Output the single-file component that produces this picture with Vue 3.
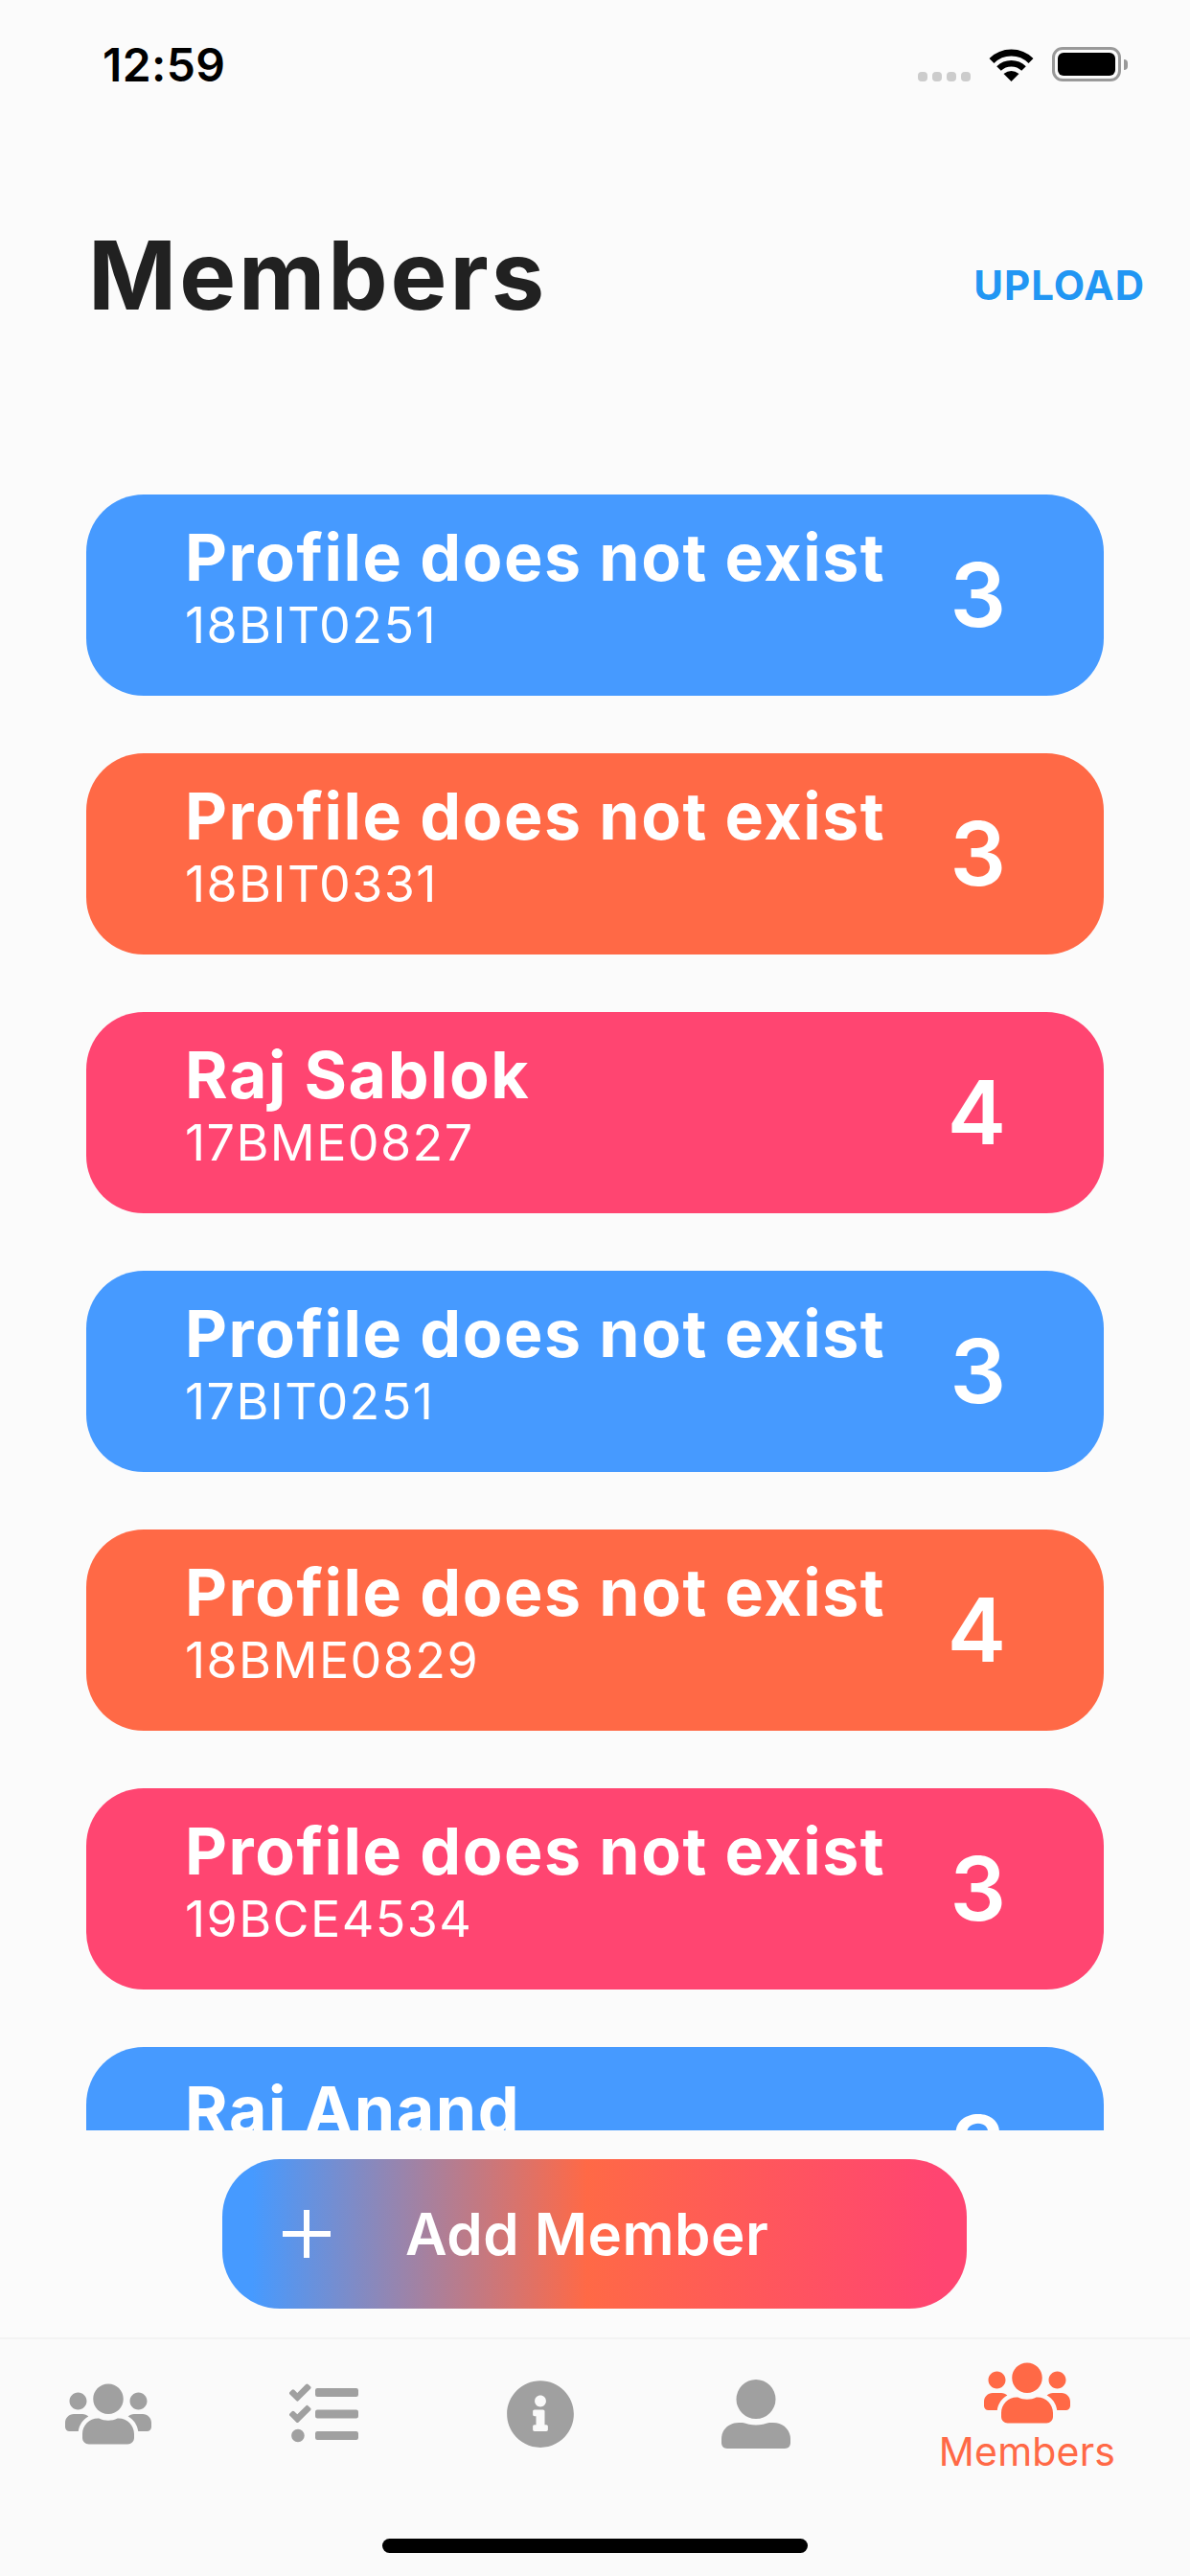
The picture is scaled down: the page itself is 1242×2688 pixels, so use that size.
<template>
  <div class="page">
    <!-- Status bar -->
    <div class="status">
      <span class="time">12:59</span>
      <div class="status-right">
        <div class="signal">
          <i v-for="n in 4" :key="n"></i>
        </div>
        <svg class="wifi" width="47" height="36" viewBox="0 0 47 36">
          <path d="M3 14.5A29 29 0 0 1 44 14.5" fill="none" stroke="#000" stroke-width="7" />
          <path d="M10.5 22.5A18.5 18.5 0 0 1 36.5 22.5" fill="none" stroke="#000" stroke-width="6.5" />
          <path d="M23.5 36L15.5 28Q23.5 22 31.5 28Z" fill="#000" />
        </svg>
        <div class="battery"><span></span></div>
      </div>
    </div>

    <!-- Header -->
    <div class="header">
      <h1>Members</h1>
      <a class="upload">UPLOAD</a>
    </div>

    <!-- Member list -->
    <div class="list">
      <div v-for="member in members" :key="member.id" class="card" :class="member.color">
        <div class="info">
          <div class="name">{{ member.name }}</div>
          <div class="reg">{{ member.id }}</div>
        </div>
        <div class="count">{{ member.count }}</div>
      </div>
    </div>

    <!-- Add button -->
    <div class="fab-row">
      <button class="fab">
        <svg class="plus" width="50" height="50" viewBox="0 0 50 50">
          <path d="M25 0V50M0 25H50" stroke="#fff" stroke-width="6" />
        </svg>
        <span>Add Member</span>
      </button>
    </div>

    <!-- Tab bar -->
    <div class="tabs">
      <div v-for="tab in tabs" :key="tab.name" class="tab" :class="{ active: tab.active }">
        <svg :width="tab.w" :height="tab.h" :viewBox="tab.box" fill="currentColor">
          <path :d="tab.d" />
        </svg>
        <span v-if="tab.active" class="tab-label">{{ tab.name }}</span>
      </div>
    </div>
    <div class="home"></div>
  </div>
</template>

<script setup>
const members = [
  { name: 'Profile does not exist', id: '18BIT0251', count: 3, color: 'blue' },
  { name: 'Profile does not exist', id: '18BIT0331', count: 3, color: 'orange' },
  { name: 'Raj Sablok', id: '17BME0827', count: 4, color: 'pink' },
  { name: 'Profile does not exist', id: '17BIT0251', count: 3, color: 'blue' },
  { name: 'Profile does not exist', id: '18BME0829', count: 4, color: 'orange' },
  { name: 'Profile does not exist', id: '19BCE4534', count: 3, color: 'pink' },
  { name: 'Raj Anand', id: '18BIT0252', count: 3, color: 'blue' }
]

const usersPath = 'M96 224c35.3 0 64-28.7 64-64s-28.7-64-64-64-64 28.7-64 64 28.7 64 64 64zm448 0c35.3 0 64-28.7 64-64s-28.7-64-64-64-64 28.7-64 64 28.7 64 64 64zm32 32h-64c-17.6 0-33.5 7.1-45.1 18.6 40.3 22.1 68.9 62 75.1 109.4h66c17.7 0 32-14.3 32-32v-32c0-35.3-28.7-64-64-64zm-256 0c61.9 0 112-50.1 112-112S381.9 32 320 32 208 82.1 208 144s50.1 112 112 112zm76.8 32h-8.3c-20.8 10-43.9 16-68.5 16s-47.6-6-68.5-16h-8.3C179.6 288 128 339.6 128 403.2V432c0 26.5 21.5 48 48 48h288c26.5 0 48-21.5 48-48v-28.8c0-63.6-51.6-115.2-115.2-115.2zm-223.7-13.4C161.5 263.1 145.6 256 128 256H64c-35.3 0-64 28.7-64 64v32c0 17.7 14.3 32 32 32h65.9c6.3-47.4 34.9-87.3 75.2-109.4z'

const tabs = [
  { name: 'Groups', w: 90, h: 72, box: '0 0 640 512', d: usersPath },
  { name: 'Tasks', w: 72, h: 72, box: '0 0 512 512', d: 'M139.61 35.5a12 12 0 0 0-17 0L58.93 98.81l-22.7-22.12a12 12 0 0 0-17 0L3.53 92.41a12 12 0 0 0 0 17l47.59 47.4a12.78 12.78 0 0 0 17.61 0l15.59-15.62L156.52 69a12.09 12.09 0 0 0 .09-17zm0 159.19a12 12 0 0 0-17 0l-63.68 63.72-22.7-22.1a12 12 0 0 0-17 0L3.53 252a12 12 0 0 0 0 17L51 316.5a12.77 12.77 0 0 0 17.6 0l15.7-15.69 72.2-72.22a12 12 0 0 0 .09-16.9zM64 368c-26.49 0-48.59 21.5-48.59 48S37.53 464 64 464a48 48 0 0 0 0-96zm432 16H208a16 16 0 0 0-16 16v32a16 16 0 0 0 16 16h288a16 16 0 0 0 16-16v-32a16 16 0 0 0-16-16zm0-320H208a16 16 0 0 0-16 16v32a16 16 0 0 0 16 16h288a16 16 0 0 0 16-16V80a16 16 0 0 0-16-16zm0 160H208a16 16 0 0 0-16 16v32a16 16 0 0 0 16 16h288a16 16 0 0 0 16-16v-32a16 16 0 0 0-16-16z' },
  { name: 'Info', w: 72, h: 72, box: '0 0 512 512', d: 'M256 8C119.043 8 8 119.083 8 256c0 136.997 111.043 248 248 248s248-111.003 248-248C504 119.083 392.957 8 256 8zm0 110c23.196 0 42 18.804 42 42s-18.804 42-42 42-42-18.804-42-42 18.804-42 42-42zm56 254c0 6.627-5.373 12-12 12h-88c-6.627 0-12-5.373-12-12v-24c0-6.627 5.373-12 12-12h12v-64h-12c-6.627 0-12-5.373-12-12v-24c0-6.627 5.373-12 12-12h64c6.627 0 12 5.373 12 12v100h12c6.627 0 12 5.373 12 12v24z' },
  { name: 'Profile', w: 72, h: 72, box: '0 0 72 72', d: 'M36 0a20.5 20.5 0 1 0 0 41a20.5 20.5 0 1 0 0-41zM6 72C2 72 0 69 0 66V62C0 52 8 45 18 45H22C26 46 31 47.5 36 47.5C41 47.5 46 46 50 45H54C64 45 72 52 72 62V66C72 69 70 72 66 72Z' },
  { name: 'Members', w: 90, h: 72, box: '0 0 640 512', d: usersPath, active: true }
]
</script>

<style scoped>
.page {
  width: 1242px;
  height: 2688px;
  position: relative;
  display: flex;
  flex-direction: column;
  overflow: hidden;
  background: #fbfbfb;
  font-family: Inter, "Liberation Sans", sans-serif;
}

/* status bar */
.status {
  height: 132px;
  box-sizing: border-box;
  padding: 42px 72px 0 107px;
  display: flex;
  justify-content: space-between;
  align-items: flex-start;
}

.time {
  font-size: 48px;
  line-height: 52px;
  font-weight: 600;
  color: #000;
  letter-spacing: 0.4px;
}

.status-right {
  display: flex;
  align-items: flex-end;
  margin-top: 7px;
}

.signal {
  display: flex;
  gap: 5px;
  margin-right: 19px;
}

.signal i {
  width: 10px;
  height: 10px;
  border-radius: 4px;
  background: #ccc;
}

.wifi {
  margin-right: 19px;
}

.battery {
  width: 72px;
  height: 36px;
  box-sizing: border-box;
  border: 3px solid #999;
  border-radius: 11px;
  padding: 3px;
  position: relative;
}

.battery span {
  display: block;
  height: 100%;
  background: #000;
  border-radius: 6px;
}

.battery::after {
  content: "";
  position: absolute;
  right: -10px;
  top: 10px;
  width: 4px;
  height: 11px;
  background: #999;
  border-radius: 0 4px 4px 0;
}

/* header */
.header {
  height: 384px;
  box-sizing: border-box;
  padding: 95px 47px 0 92px;
  display: flex;
  justify-content: space-between;
  align-items: flex-start;
}

h1 {
  margin: 0;
  font-size: 99px;
  line-height: 120px;
  font-weight: 700;
  letter-spacing: 2.9px;
  color: #212121;
}

.upload {
  margin-top: 46px;
  font-size: 42px;
  line-height: 50px;
  font-weight: 700;
  letter-spacing: 1px;
  color: #2196f3;
}

/* list */
.list {
  height: 1707px;
  overflow: hidden;
  padding: 0 90px;
  display: flex;
  flex-direction: column;
  gap: 60px;
}

.card {
  flex: none;
  height: 210px;
  box-sizing: border-box;
  padding: 26px 102px 0 103px;
  border-radius: 60px;
  display: flex;
  justify-content: space-between;
  color: #fff;
}

.blue { background: #469aff; }
.orange { background: #ff6946; }
.pink { background: #ff4571; }

.name {
  font-size: 68px;
  line-height: 78px;
  font-weight: 700;
  letter-spacing: 1.55px;
}

.reg {
  margin-top: 3px;
  font-size: 52px;
  line-height: 60px;
  font-weight: 400;
  letter-spacing: 1.4px;
}

.count {
  font-size: 92px;
  line-height: 112px;
  font-weight: 600;
  margin-top: 23px;
}

/* add button */
.fab-row {
  height: 216px;
  box-sizing: border-box;
  padding: 30px 0 0 232px;
}

.fab {
  width: 777px;
  height: 156px;
  border: 0;
  border-radius: 60px;
  padding: 0 0 0 63px;
  display: flex;
  align-items: center;
  background: linear-gradient(to right, #469aff 4%, #ff6946 49%, #ff4571 96%);
  color: #fff;
  font-family: inherit;
  font-size: 60px;
  font-weight: 600;
  letter-spacing: 0.5px;
}

.plus {
  margin-right: 78px;
}

/* tab bar */
.tabs {
  flex: 1;
  display: grid;
  grid-template-columns: repeat(4, 225.5px) 1fr;
  border-top: 2px solid #f3f3f3;
  background: #fafafa;
  color: #a0a0a0;
}

.tab {
  display: flex;
  flex-direction: column;
  align-items: center;
  padding-top: 42px;
}

.tab.active {
  padding-top: 20px;
  color: #ff6946;
}

.tab-label {
  font-size: 41px;
  line-height: 48px;
  letter-spacing: 0.2px;
  margin-top: 1px;
}

.home {
  position: absolute;
  left: 399px;
  top: 2649px;
  width: 444px;
  height: 15px;
  border-radius: 8px;
  background: #000;
}
</style>

<style>
html, body {
  margin: 0;
  background: #fbfbfb;
}
</style>
